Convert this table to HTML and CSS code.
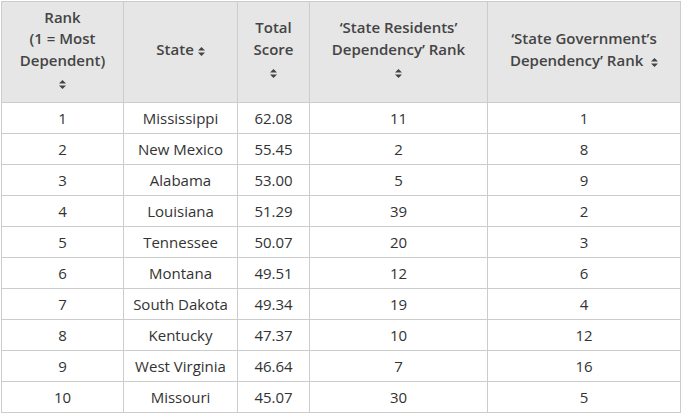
FILE: index.html
```html
<!DOCTYPE html>
<html>
<head>
<meta charset="utf-8">
<link rel="stylesheet" href="styles.css">
</head>
<body>
<div class="wrap">
<table class="grid">
  <colgroup>
    <col class="c1"><col class="c2"><col class="c3"><col class="c4"><col class="c5">
  </colgroup>
  <thead>
    <tr>
      <th>Rank<br>(1 = Most<br>Dependent)<br><svg class="sort" viewBox="0 0 7 9"><path d="M3.5 0L7 3.6H0z M3.5 9L0 5.4H7z"/></svg></th>
      <th>State <svg class="sort" viewBox="0 0 7 9"><path d="M3.5 0L7 3.6H0z M3.5 9L0 5.4H7z"/></svg></th>
      <th>Total<br>Score<br><svg class="sort" viewBox="0 0 7 9"><path d="M3.5 0L7 3.6H0z M3.5 9L0 5.4H7z"/></svg></th>
      <th>‘State Residents’<br>Dependency’ Rank<br><svg class="sort" viewBox="0 0 7 9"><path d="M3.5 0L7 3.6H0z M3.5 9L0 5.4H7z"/></svg></th>
      <th>‘State Government’s<br>Dependency’ Rank &nbsp;<svg class="sort" viewBox="0 0 7 9"><path d="M3.5 0L7 3.6H0z M3.5 9L0 5.4H7z"/></svg></th>
    </tr>
  </thead>
  <tbody>
    <tr><td>1</td><td>Mississippi</td><td>62.08</td><td>11</td><td>1</td></tr>
    <tr><td>2</td><td>New Mexico</td><td>55.45</td><td>2</td><td>8</td></tr>
    <tr><td>3</td><td>Alabama</td><td>53.00</td><td>5</td><td>9</td></tr>
    <tr><td>4</td><td>Louisiana</td><td>51.29</td><td>39</td><td>2</td></tr>
    <tr><td>5</td><td>Tennessee</td><td>50.07</td><td>20</td><td>3</td></tr>
    <tr><td>6</td><td>Montana</td><td>49.51</td><td>12</td><td>6</td></tr>
    <tr><td>7</td><td>South Dakota</td><td>49.34</td><td>19</td><td>4</td></tr>
    <tr><td>8</td><td>Kentucky</td><td>47.37</td><td>10</td><td>12</td></tr>
    <tr><td>9</td><td>West Virginia</td><td>46.64</td><td>7</td><td>16</td></tr>
    <tr><td>10</td><td>Missouri</td><td>45.07</td><td>30</td><td>5</td></tr>
  </tbody>
</table>
</div>
</body>
</html>
```
FILE: styles.css
```css
html, body {
  margin: 0;
  padding: 0;
  background: #ffffff;
}
.wrap {
  padding: 1px 0 0 1px;
}
.grid {
  border-collapse: separate;
  border-spacing: 0;
  table-layout: fixed;
  width: 679px;
  border-left: 1px solid #cccccc;
  border-top: 1px solid #cccccc;
  font-family: "Open Sans", Lato, sans-serif;
  font-size: 15px;
  color: #333333;
}
.c1 { width: 122px; }
.c2 { width: 114px; }
.c3 { width: 72px; }
.c4 { width: 178px; }
.c5 { width: 193px; }
.grid th, .grid td {
  border-right: 1px solid #cccccc;
  border-bottom: 1px solid #cccccc;
  text-align: center;
  vertical-align: middle;
  padding: 0;
}
.grid th {
  background: #e6e6e6;
  color: #444444;
  font-weight: 600;
  line-height: 21.7px;
  height: 96px;
  padding-bottom: 4px;
}
.grid td {
  height: 30px;
  line-height: 30px;
}
.sort {
  width: 7px;
  height: 9px;
  fill: #444444;
  vertical-align: -1px;
}
```
